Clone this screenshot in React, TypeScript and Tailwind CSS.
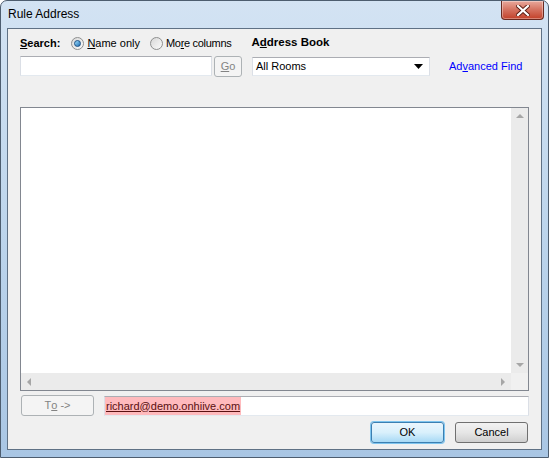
const font = { fontFamily: '"Liberation Sans", Arial, sans-serif' };

function Radio({ checked }: { checked?: boolean }) {
  return (
    <span className="relative inline-flex h-[13px] w-[13px] items-center justify-center rounded-full border border-[#8e8f8f] bg-gradient-to-br from-[#d8d8d8] to-[#fbfbfb]">
      {checked && (
        <span className="h-[7px] w-[7px] rounded-full border border-[#1a4f85] bg-gradient-to-br from-[#9ee0ff] to-[#1c6fb3]" />
      )}
    </span>
  );
}

function Arrow({ dir }: { dir: 'up' | 'down' | 'left' | 'right' }) {
  const pts = {
    up: '0,4 4,0 8,4',
    down: '0,0 8,0 4,4',
    left: '4,0 4,8 0,4',
    right: '0,0 0,8 4,4',
  }[dir];
  const w = dir === 'up' || dir === 'down' ? 8 : 4;
  const h = dir === 'up' || dir === 'down' ? 4 : 8;
  return (
    <svg width={w} height={h} viewBox={`0 0 ${w} ${h}`}>
      <polygon points={pts} fill="#a6a6a6" />
    </svg>
  );
}

function DisabledButton({ children, className = '' }: { children: React.ReactNode; className?: string }) {
  return (
    <div className={`flex items-center justify-center rounded-[3px] border border-[#adb2b5] bg-[#f4f4f4] text-[11px] text-[#838383] ${className}`}>
      {children}
    </div>
  );
}

export default function App() {
  return (
    <div
      style={font}
      className="flex h-[458px] w-[549px] flex-col overflow-hidden rounded-t-[7px] border border-[#4d5d6f] bg-gradient-to-b from-[#d3e3f3] via-[#bdd5ec] to-[#a9c6e4] text-[#000]"
    >
      {/* Title bar */}
      <div className="flex h-[27px] items-start justify-between pl-[7px] pr-[4px]">
        <span className="mt-[6px] text-[12px] leading-[14px] text-black">Rule Address</span>
        <div className="flex h-[19px] w-[43px] items-center justify-center rounded-b-[4px] border border-t-0 border-[#6a2a20] bg-gradient-to-b from-[#e8a89c] via-[#d4705e] to-[#c23f27] shadow-[inset_0_0_0_1px_rgba(255,255,255,0.35)]">
          <svg width="14" height="11" viewBox="0 0 14 11">
            <path d="M2 1 L12 10 M12 1 L2 10" stroke="#5a1e14" strokeWidth="4" strokeLinecap="square" />
            <path d="M2 1 L12 10 M12 1 L2 10" stroke="#ffffff" strokeWidth="2.2" strokeLinecap="square" />
          </svg>
        </div>
      </div>

      {/* Client area */}
      <div className="mx-[6px] mb-[7px] flex flex-1 flex-col border border-[#5f7185] bg-[#f0f0f0] px-[12px] pt-[6px]">
        {/* labels row */}
        <div className="flex h-[16px] items-center text-[11px]">
          <span className="font-bold">
            <span className="underline">S</span>earch:
          </span>
          <span className="ml-[11px] flex items-center gap-[3px]">
            <Radio checked />
            <span>
              <span className="underline">N</span>ame only
            </span>
          </span>
          <span className="ml-[10px] flex items-center gap-[3px]">
            <Radio />
            <span className="tracking-[-0.3px]">
              Mo<span className="underline">r</span>e columns
            </span>
          </span>
          <span className="ml-[20px] text-[11.5px] font-bold">
            A<span className="underline">d</span>dress Book
          </span>
        </div>

        {/* inputs row */}
        <div className="mt-[5px] flex h-[20px] items-center">
          <div className="h-[20px] w-[192px] border border-[#abadb3] border-x-[#dbdfe6] border-b-[#e3e9ef] bg-white" />
          <DisabledButton className="ml-[2px] h-[21px] w-[28px]">
            <span className="underline">G</span>o
          </DisabledButton>
          <div className="ml-[10px] flex h-[19px] w-[178px] items-center justify-between border border-[#abadb3] border-x-[#dbdfe6] border-b-[#e3e9ef] bg-white pl-[3px] pr-[6px] text-[11px]">
            <span>All Rooms</span>
            <svg width="9" height="5" viewBox="0 0 9 5">
              <polygon points="0,0 9,0 4.5,5" fill="#000" />
            </svg>
          </div>
          <span className="ml-[19px] text-[11px] text-[#0000ff]">
            Ad<span className="underline">v</span>anced Find
          </span>
        </div>

        {/* list */}
        <div className="mt-[31px] flex h-[284px] w-[509px] flex-col border border-[#828790] bg-white">
          <div className="flex flex-1">
            <div className="flex-1" />
            <div className="flex w-[17px] flex-col items-center justify-between bg-[#ebebeb] py-[6px]">
              <Arrow dir="up" />
              <Arrow dir="down" />
            </div>
          </div>
          <div className="flex h-[17px]">
            <div className="flex flex-1 items-center justify-between bg-[#ebebeb] px-[6px]">
              <Arrow dir="left" />
              <Arrow dir="right" />
            </div>
            <div className="w-[17px] bg-[#f0f0f0]" />
          </div>
        </div>

        {/* To row */}
        <div className="mt-[4px] flex h-[21px] items-center">
          <DisabledButton className="ml-[1px] h-[21px] w-[73px]">
            T<span className="underline">o</span>&nbsp;-&gt;
          </DisabledButton>
          <div className="ml-[10px] flex h-[20px] w-[425px] items-center border border-[#abadb3] border-x-[#dbdfe6] border-b-[#e3e9ef] bg-white">
            <span className="bg-[#ffbabd] px-[1px] text-[11px] leading-[18px] text-[#5a1010] underline">
              richard@demo.onhiive.com
            </span>
          </div>
        </div>

        {/* buttons */}
        <div className="mt-[6px] flex items-center justify-end gap-[11px] pr-[1px] text-[11px]">
          <div className="flex h-[21px] w-[73px] items-center justify-center rounded-[3px] border border-[#3c7fb1] bg-gradient-to-b from-[#eaf6fd] via-[#d9f0fc] to-[#a7d9f5] shadow-[0_0_0_1px_#7ec5ef]">
            OK
          </div>
          <div className="flex h-[21px] w-[73px] items-center justify-center rounded-[3px] border border-[#707070] bg-gradient-to-b from-[#f2f2f2] via-[#e6e6e6] to-[#cfcfcf]">
            Cancel
          </div>
        </div>
      </div>
    </div>
  );
}
